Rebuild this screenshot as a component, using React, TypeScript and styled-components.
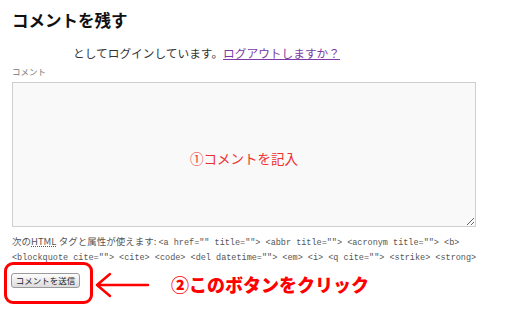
import React from "react";
import styled, { createGlobalStyle } from "styled-components";

const GlobalStyle = createGlobalStyle`
  html, body {
    margin: 0;
    padding: 0;
    background: #fff;
  }
  body {
    font-family: "Noto Sans CJK JP", "Liberation Sans", sans-serif;
  }
`;

const Page = styled.div`
  position: relative;
  width: 514px;
  height: 325px;
  padding: 10px 0 0 12px;
  box-sizing: border-box;
  overflow: hidden;
`;

const Title = styled.h3`
  margin: 0;
  font-size: 16.5px;
  line-height: 20px;
  font-weight: 700;
  color: #111;
`;

const LoggedIn = styled.p`
  margin: 15px 0 0 61px;
  font-size: 11.7px;
  line-height: 16px;
  color: #333;

  a {
    color: #7b3aa6;
    text-decoration: underline;
  }
`;

const Label = styled.label`
  display: block;
  margin-top: 4px;
  font-size: 8.5px;
  line-height: 12px;
  color: #777;
`;

const Comment = styled.textarea`
  display: block;
  margin-top: 5px;
  width: 464px;
  height: 145px;
  box-sizing: border-box;
  border: 1px solid #cfcfcf;
  background: #f9f9f9;
  padding: 66px 0 0;
  text-align: center;
  font-family: "Noto Sans CJK JP", sans-serif;
  font-size: 13.5px;
  line-height: 18px;
  resize: vertical;

  &::placeholder {
    color: #f03030;
    opacity: 1;
  }
`;

const Tags = styled.p`
  margin: 8px 0 0;
  font-size: 9.5px;
  line-height: 13px;
  color: #555;
  white-space: nowrap;

  abbr {
    text-decoration: underline dotted;
  }

  code {
    font-family: "Liberation Mono", monospace;
    font-size: 8.5px;
  }
`;

const SubmitButton = styled.button`
  display: block;
  margin: 8px 0 0 -1px;
  width: 69px;
  height: 15px;
  padding: 0;
  border: 1px solid #9a9a9a;
  border-radius: 3px;
  background: linear-gradient(#fdfdfd, #dcdcdc);
  font-family: "Noto Sans CJK JP", sans-serif;
  font-size: 8.5px;
  line-height: 13px;
  color: #222;
`;

const Highlight = styled.div`
  position: absolute;
  left: 4px;
  top: 262px;
  width: 89px;
  height: 42px;
  box-sizing: border-box;
  border: 3px solid #f00;
  border-radius: 9px;
`;

const Arrow = styled.svg`
  position: absolute;
  left: 94px;
  top: 272px;
`;

const Callout = styled.div`
  position: absolute;
  left: 171px;
  top: 272px;
  font-size: 18px;
  line-height: 24px;
  font-weight: 900;
  color: #f00;
  white-space: nowrap;
`;

const App = () => {
  return (
    <>
      <GlobalStyle />
      <Page>
        <Title>コメントを残す</Title>
        <LoggedIn>
          としてログインしています。<a href="#">ログアウトしますか？</a>
        </LoggedIn>
        <Label htmlFor="comment">コメント</Label>
        <Comment id="comment" placeholder="①コメントを記入" />
        <Tags>
          次の<abbr title="HyperText Markup Language">HTML</abbr> タグと属性が使えます:{" "}
          <code>{'<a href="" title=""> <abbr title=""> <acronym title=""> <b>'}</code>
          <br />
          <code>
            {'<blockquote cite=""> <cite> <code> <del datetime=""> <em> <i> <q cite=""> <strike> <strong>'}
          </code>
        </Tags>
        <SubmitButton type="button">コメントを送信</SubmitButton>
        <Highlight />
        <Arrow width="56" height="26" viewBox="0 0 56 26">
          <path
            d="M16 2 L3 13 L16 24 M3 13 L54 13"
            fill="none"
            stroke="#f00"
            strokeWidth="2.5"
            strokeLinecap="round"
            strokeLinejoin="round"
          />
        </Arrow>
        <Callout>②このボタンをクリック</Callout>
      </Page>
    </>
  );
};

export default App;
